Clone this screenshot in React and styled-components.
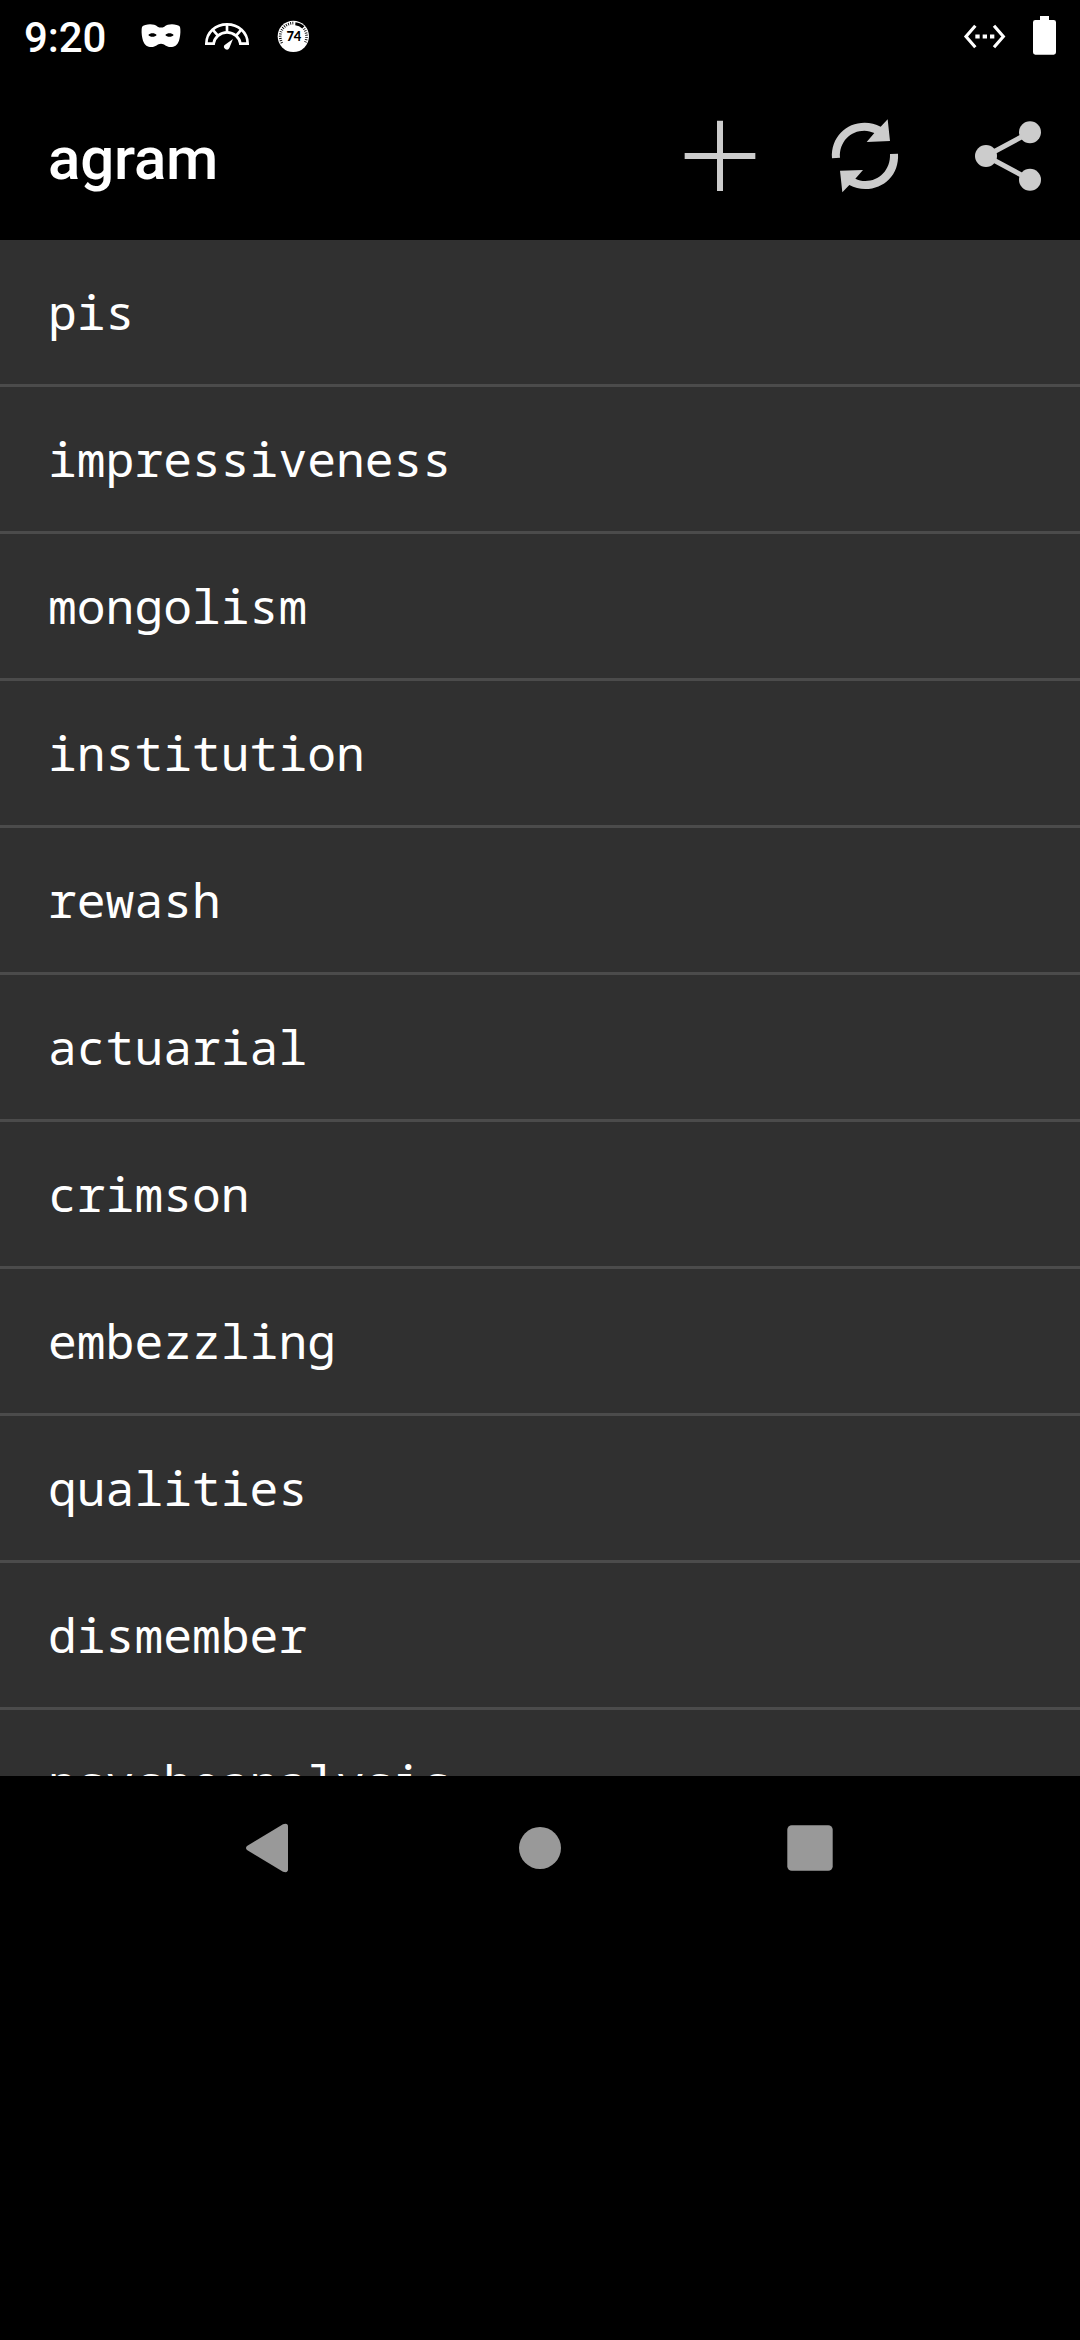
import React from 'react';
import styled, { createGlobalStyle } from 'styled-components';

const GlobalStyle = createGlobalStyle`
  * { box-sizing: border-box; }
  html, body { margin: 0; padding: 0; background: #000; }
`;

const Screen = styled.div`
  width: 1080px;
  height: 2340px;
  display: flex;
  flex-direction: column;
  background: #000;
  overflow: hidden;
  font-family: Roboto, "Liberation Sans", sans-serif;
`;

const StatusBar = styled.header`
  height: 72px;
  flex: none;
  display: flex;
  align-items: center;
  padding: 0 18px 0 24px;
  color: #fff;
`;

const Clock = styled.time`
  width: 104px;
  padding-top: 4px;
  font-size: 42px;
  line-height: 48px;
  font-weight: 500;
  letter-spacing: -0.1px;
  white-space: nowrap;
`;

const Spacer = styled.div`
  flex: 1;
`;

const Icon = styled.svg`
  display: block;
  flex: none;
  width: ${(p) => p.$w}px;
  height: ${(p) => p.$h}px;
`;

const ActionBar = styled.div`
  height: 168px;
  flex: none;
  display: flex;
  align-items: center;
  padding-left: 48px;
`;

const Title = styled.h1`
  flex: 1;
  margin: 0;
  padding-top: 6px;
  color: #fff;
  font-size: 60px;
  line-height: 70px;
  font-weight: 500;
  letter-spacing: -0.2px;
`;

const ActionButton = styled.button`
  width: 144px;
  height: 168px;
  padding: 0;
  border: 0;
  background: none;
  color: #ccc;
`;

const WordList = styled.ul`
  height: 1536px;
  flex: none;
  margin: 0;
  padding: 0;
  list-style: none;
  overflow: hidden;
  background: #303030;
`;

const Word = styled.li`
  height: 147px;
  padding: 0 48px;
  border-bottom: 3px solid #4b4b4b;
  color: #fff;
  font-family: "Droid Sans Mono", "Noto Sans Mono", "DejaVu Sans Mono", monospace;
  font-size: 48px;
  line-height: 144px;
  white-space: nowrap;
`;

const NavBar = styled.nav`
  height: 144px;
  flex: none;
  display: flex;
  justify-content: center;
`;

const NavButton = styled.button`
  width: 270px;
  height: 144px;
  padding: 0;
  border: 0;
  background: none;
  color: #999;
  display: flex;
  justify-content: center;
`;

const words = [
  'pis', 'impressiveness', 'mongolism', 'institution', 'rewash', 'actuarial',
  'crimson', 'embezzling', 'qualities', 'dismember', 'psychoanalysis',
];

const MaskIcon = () => (
  <Icon $w={66} $h={72} viewBox="-6 -30 198 216" fill="currentColor">
    <path fillRule="evenodd" d="M35 57C35 49 40 46 46 45C60 41 74 43 83 50Q93 55 103 50C112 43 126 41 140 45C147 46 151 49 151 57C152 70 150 82 147 92C142 106 133 111 122 111C108 111 104 101 93 101C82 101 78 111 64 111C53 111 44 106 39 92C36 82 34 70 35 57ZM55 75C59 82 76 82 80 75C75 68 60 68 55 75ZM106 75C110 82 127 82 131 75C126 68 111 68 106 75Z" />
  </Icon>
);

const GaugeIcon = () => (
  <Icon $w={66} $h={72} viewBox="192 -30 198 216" fill="none" stroke="currentColor" strokeWidth="8">
    <path d="M229 101C229 67 257 43 291 43S353 67 353 101H331C329 82 311 67 291 67S253 82 251 101Z" />
    <path d="M291 42V67M248 59L263 76M334 59L319 76" />
    <path d="M309 87L298 114A8.500 8.500 0 1 1 283 106Z" fill="currentColor" stroke="none" />
  </Icon>
);

const DialIcon = () => (
  <Icon $w={66} $h={72} viewBox="390 -30 198 216">
    <circle cx="490" cy="79" r="47" fill="currentColor" />
    <path d="M456 99A39.500 39.500 0 0 1 490 39.500" fill="none" stroke="#000" strokeWidth="8" strokeDasharray="2.600 4" />
    <path d="M522 56A39.500 39.500 0 0 1 525 98" fill="none" stroke="#000" strokeWidth="8" strokeDasharray="2.600 4" />
    <path d="M496 41Q510 42 520 52" fill="none" stroke="#000" strokeWidth="9" />
    <text x="491" y="94" textAnchor="middle" fontFamily="Lato, sans-serif" fontWeight="900" fontSize="39" letterSpacing="-1" fill="#000">74</text>
  </Icon>
);

const EthernetIcon = () => (
  <Icon $w={60} $h={72} viewBox="162 0 180 216" fill="none" stroke="currentColor">
    <path d="M226 77L198 109.500L226 142M282 77L310 109.500L282 142" strokeWidth="9.500" />
    <path d="M226 109.500h13M248 109.500h13M270 109.500h13" strokeWidth="12" />
  </Icon>
);

const BatteryIcon = () => (
  <Icon $w={48} $h={72} viewBox="342 0 144 216" fill="currentColor">
    <path d="M420 48h27v12h14q7 0 7 7v90q0 7-7 7h-55q-7 0-7-7v-90q0-7 7-7h14z" />
  </Icon>
);

const PlusIcon = () => (
  <Icon $w={144} $h={168} viewBox="-36 -54 432 504" stroke="currentColor" strokeWidth="18">
    <path d="M180 92V303M74 198H286" />
  </Icon>
);

const RefreshIcon = () => (
  <Icon $w={144} $h={168} viewBox="396 -54 432 504" fill="currentColor">
    <path d="M516 205C512 142 558 98 614 98C631 98 647 102 662 110L683 88L690 153L620 156L643 129C634 125 624 122 613 122C572 122 537 155 540 203Z" />
    <path d="M714 191C718 254 672 297 616 297C599 297 583 293 568 285L547 307L540 242L609 240L586 266C595 270 605 273 616 273C657 273 692 240 690 192Z" />
  </Icon>
);

const ShareIcon = () => (
  <Icon $w={144} $h={168} viewBox="828 -54 432 504" fill="currentColor">
    <path d="M1110 127L978 198L1110 269" fill="none" stroke="currentColor" strokeWidth="15" />
    <circle cx="1110" cy="127" r="33" />
    <circle cx="978" cy="198" r="33" />
    <circle cx="1110" cy="269" r="33" />
  </Icon>
);

const BackIcon = () => (
  <Icon $w={144} $h={144} viewBox="594 288 432 432" fill="currentColor">
    <path d="M741 498L849 433Q864 428 864 440V568Q864 580 849 575L741 510Q735 504 741 498Z" />
  </Icon>
);

const HomeIcon = () => (
  <Icon $w={144} $h={144} viewBox="0 0 144 144" fill="currentColor">
    <circle cx="72" cy="72" r="21" />
  </Icon>
);

const RecentsIcon = () => (
  <Icon $w={144} $h={144} viewBox="0 0 144 144" fill="currentColor">
    <rect x="49.300" y="49.300" width="45.400" height="45.400" rx="4.500" />
  </Icon>
);

export default function App() {
  return (
    <Screen>
      <GlobalStyle />
      <StatusBar>
        <Clock>9:20</Clock>
        <MaskIcon />
        <GaugeIcon />
        <DialIcon />
        <Spacer />
        <EthernetIcon />
        <BatteryIcon />
      </StatusBar>
      <ActionBar>
        <Title>agram</Title>
        <ActionButton aria-label="Add"><PlusIcon /></ActionButton>
        <ActionButton aria-label="Refresh"><RefreshIcon /></ActionButton>
        <ActionButton aria-label="Share"><ShareIcon /></ActionButton>
      </ActionBar>
      <WordList>
        {words.map((word) => <Word key={word}>{word}</Word>)}
      </WordList>
      <NavBar>
        <NavButton aria-label="Back"><BackIcon /></NavButton>
        <NavButton aria-label="Home"><HomeIcon /></NavButton>
        <NavButton aria-label="Recents"><RecentsIcon /></NavButton>
      </NavBar>
    </Screen>
  );
}
